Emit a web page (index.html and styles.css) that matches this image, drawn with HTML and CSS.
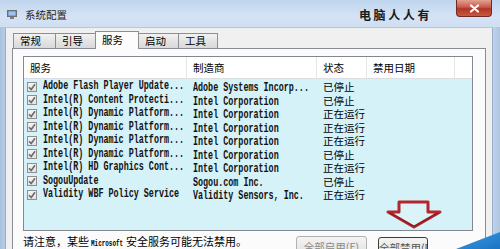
FILE: index.html
```html
<!DOCTYPE html>
<html lang="zh-CN">
<head>
    <meta charset="UTF-8">
    <title>系统配置</title>
    <link rel="stylesheet" href="styles.css">
</head>
<body>
    <div class="window">
        <!-- title bar -->
        <div class="titlebar">
            <span class="app-icon">
                <svg width="10" height="9" viewBox="0 0 10 9">
                    <rect x="0.5" y="0.5" width="9" height="6" fill="#5b86c0" stroke="#6d6f74"/>
                    <rect x="1.5" y="1.5" width="7" height="4" fill="#9cc4ee"/>
                    <rect x="3" y="7" width="4" height="2" fill="#7b7d82"/>
                </svg>
            </span>
            <span class="title">系统配置</span>
            <span class="mark">电脑人人有</span>
            <span class="close">
                <svg width="11" height="9" viewBox="0 0 11 9">
                    <path d="M2 1.5 L9 7.5 M9 1.5 L2 7.5" stroke="#fff" stroke-width="2.2" stroke-linecap="round"/>
                </svg>
            </span>
        </div>

        <div class="client">
            <!-- tabs -->
            <div class="tabs">
                <div class="tab w42">常规</div>
                <div class="tab w40">引导</div>
                <div class="tab w43 active">服务</div>
                <div class="tab w40">启动</div>
                <div class="tab w39">工具</div>
            </div>

            <div class="panel">
                <div class="list">
                    <div class="list-head">
                        <div class="col c1">服务</div>
                        <div class="col c2">制造商</div>
                        <div class="col c3">状态</div>
                        <div class="col c4">禁用日期</div>
                        <div class="col c5"></div>
                    </div>
                    <div class="rows" id="rows"></div>
                </div>

                <div class="footer">
                    <span class="note">请注意，某些 <span class="ms">Microsoft</span> 安全服务可能无法禁用。</span>
                    <div class="actions">
                        <button class="btn btn-on">全部启用(E)</button>
                        <button class="btn btn-off">全部禁用(D)</button>
                    </div>
                </div>
            </div>
        </div>

        <!-- red arrow drawn over the list -->
        <svg class="arrow" width="58" height="30" viewBox="0 0 58 30">
            <path d="M14 2 H43 V12 H55 L29 27 L3 12 H14 Z" fill="rgba(255,255,255,0.15)" stroke="#b3262b" stroke-width="3" stroke-linejoin="round"/>
            <path d="M5 13 L29 26.5 L53 13" fill="none" stroke="#7e1a1e" stroke-width="1"/>
        </svg>
        <div class="corner"></div>
    </div>

    <script>
        const services = [
            ["Adobe Flash Player Update...", "Adobe Systems Incorp...", "已停止"],
            ["Intel(R) Content Protecti...", "Intel Corporation", "已停止"],
            ["Intel(R) Dynamic Platform...", "Intel Corporation", "正在运行"],
            ["Intel(R) Dynamic Platform...", "Intel Corporation", "正在运行"],
            ["Intel(R) Dynamic Platform...", "Intel Corporation", "正在运行"],
            ["Intel(R) Dynamic Platform...", "Intel Corporation", "已停止"],
            ["Intel(R) HD Graphics Cont...", "Intel Corporation", "正在运行"],
            ["SogouUpdate", "Sogou.com Inc.", "已停止"],
            ["Validity WBF Policy Service", "Validity Sensors, Inc.", "正在运行"]
        ];

        const check = '<svg width="8" height="8" viewBox="0 0 8 8"><path d="M1 4.2 L3.2 6.5 L7 1.2" fill="none" stroke="#6a6a6a" stroke-width="1.6"/></svg>';

        const rowsEl = document.getElementById("rows");
        services.forEach(([name, maker, state]) => {
            const row = document.createElement("div");
            row.className = "row";
            row.innerHTML =
                `<div class="col c1"><span class="box">${check}</span><span class="mono">${name}</span></div>` +
                `<div class="col c2"><span class="mono">${maker}</span></div>` +
                `<div class="col c3">${state}</div>`;
            rowsEl.appendChild(row);
        });
    </script>
</body>
</html>
```

FILE: styles.css
```css
body {
    margin: 0;
    font-family: "Noto Sans CJK SC", "Liberation Sans", sans-serif;
    color: #000;
}
.window {
    position: relative;
    width: 500px;
    height: 249px;
    overflow: hidden;
    background: linear-gradient(90deg, #a9c1dd, #c6d9ef 2%, #c6d9ef 98%, #aec5e0);
}
.titlebar {
    height: 27px;
    display: flex;
    align-items: center;
    padding-left: 7px;
    background: linear-gradient(180deg, #c0d5ee, #d4e3f5 60%, #cfdff2);
}
.app-icon {
    display: flex;
    width: 10px;
    margin-right: 8px;
    margin-top: 2px;
}
.title {
    font-size: 10.5px;
    color: #1e1e1e;
    margin-top: 1px;
}
.mark {
    margin-left: auto;
    margin-right: 24px;
    margin-top: 2px;
    font-size: 12px;
    font-weight: bold;
    letter-spacing: 2.6px;
    color: #1a1a1a;
}
.close {
    align-self: flex-start;
    width: 36px;
    height: 17px;
    margin-right: 8px;
    display: flex;
    align-items: center;
    justify-content: center;
    box-sizing: border-box;
    border: 1px solid #6f2a26;
    border-top: none;
    border-radius: 0 0 4px 4px;
    background: linear-gradient(180deg, #e2a290, #c8594a 45%, #b33426 55%, #c85a40);
}
.client {
    margin: 0 7px 0 5px;
    height: 222px;
    box-sizing: border-box;
    border-left: 1px solid #9aaecb;
    border-right: 1px solid #9aaecb;
    border-top: 1px solid #b6c7de;
    padding: 3px 6px 0 6px;
    background: #f0f0f0;
}
.tabs {
    display: flex;
    align-items: flex-end;
    height: 17px;
    padding-left: 1px;
    position: relative;
    z-index: 1;
}
.tab {
    height: 15px;
    box-sizing: border-box;
    padding-left: 6px;
    font-size: 10.5px;
    line-height: 14px;
    border: 1px solid #8c8e94;
    border-bottom: none;
    margin-right: -1px;
    background: linear-gradient(180deg, #f2f2f2, #e4e4e4 50%, #d9d9d9);
}
.tab.active {
    height: 18px;
    margin-bottom: -1px;
    background: #fcfcfc;
    line-height: 16px;
    position: relative;
    z-index: 2;
}
.w42 { width: 43px; }
.w40 { width: 41px; }
.w43 { width: 44px; }
.w39 { width: 40px; }
.panel {
    height: 210px;
    box-sizing: border-box;
    border: 1px solid #898c95;
    background: #fbfbfb;
    padding: 7px 12px 0 10px;
}
.list {
    width: 450px;
    height: 175px;
    box-sizing: border-box;
    border: 1px solid #828790;
    background: #d5f2f8;
}
.list-head {
    display: flex;
    height: 21px;
    background: #fff;
    border-bottom: 1px solid #dadde2;
    font-size: 10.5px;
    line-height: 21px;
}
.col {
    flex: none;
    box-sizing: border-box;
    padding-left: 6px;
    white-space: nowrap;
}
.list-head .col {
    border-right: 1px solid #e5e5e5;
}
.list-head .c5 {
    border-right: none;
}
.c1 { width: 163px; }
.c2 { width: 130px; }
.c3 { width: 50px; }
.c4 { width: 88px; }
.c5 { width: 17px; }
.rows {
    padding-top: 1px;
}
.row {
    display: flex;
    height: 13.5px;
    line-height: 13.5px;
    font-size: 10.5px;
}
.row .c1 {
    padding-left: 3px;
    display: flex;
    align-items: center;
}
.box {
    width: 10px;
    height: 10px;
    box-sizing: border-box;
    border: 1px solid #8f8f8f;
    background: linear-gradient(180deg, #f4f4f4, #e2e2e2);
    display: flex;
    align-items: center;
    justify-content: center;
    margin-right: 6px;
}
.mono {
    display: inline-block;
    font-family: "Liberation Mono", monospace;
    font-size: 12px;
    font-weight: bold;
    color: #111;
    transform: scaleX(0.7);
    transform-origin: left center;
}
.footer {
    display: flex;
    align-items: flex-start;
    margin-top: 3px;
}
.note {
    font-size: 11px;
    line-height: 15px;
    white-space: nowrap;
}
.ms {
    display: inline-block;
    width: 32px;
    font-family: "Liberation Mono", monospace;
    font-size: 9px;
    font-weight: bold;
    transform: scaleX(0.66);
    transform-origin: left center;
    vertical-align: 0;
}
.actions {
    display: flex;
    gap: 11px;
    margin-left: auto;
    margin-right: 45px;
    margin-top: 2px;
}
.btn {
    height: 22px;
    padding: 0;
    font-family: "Noto Sans CJK SC", sans-serif;
    font-size: 10.5px;
    line-height: 18px;
    color: #8a8a8a;
    border: 1px solid #adb2b5;
    border-radius: 3px;
    background: linear-gradient(180deg, #f4f4f4, #e9e9e9 50%, #dcdcdc);
    white-space: nowrap;
    overflow: hidden;
}
.btn-on {
    width: 71px;
}
.btn-off {
    width: 50px;
    margin-top: 1px;
    border-color: #3c3c3c;
    color: #555;
}
.arrow {
    position: absolute;
    left: 385px;
    top: 200px;
}
.corner {
    position: absolute;
    right: 0;
    bottom: 0;
    width: 44px;
    height: 17px;
    background: linear-gradient(160deg, #3d9be0, #1c74c4);
    clip-path: polygon(0 100%, 100% 0, 100% 100%);
}
```
